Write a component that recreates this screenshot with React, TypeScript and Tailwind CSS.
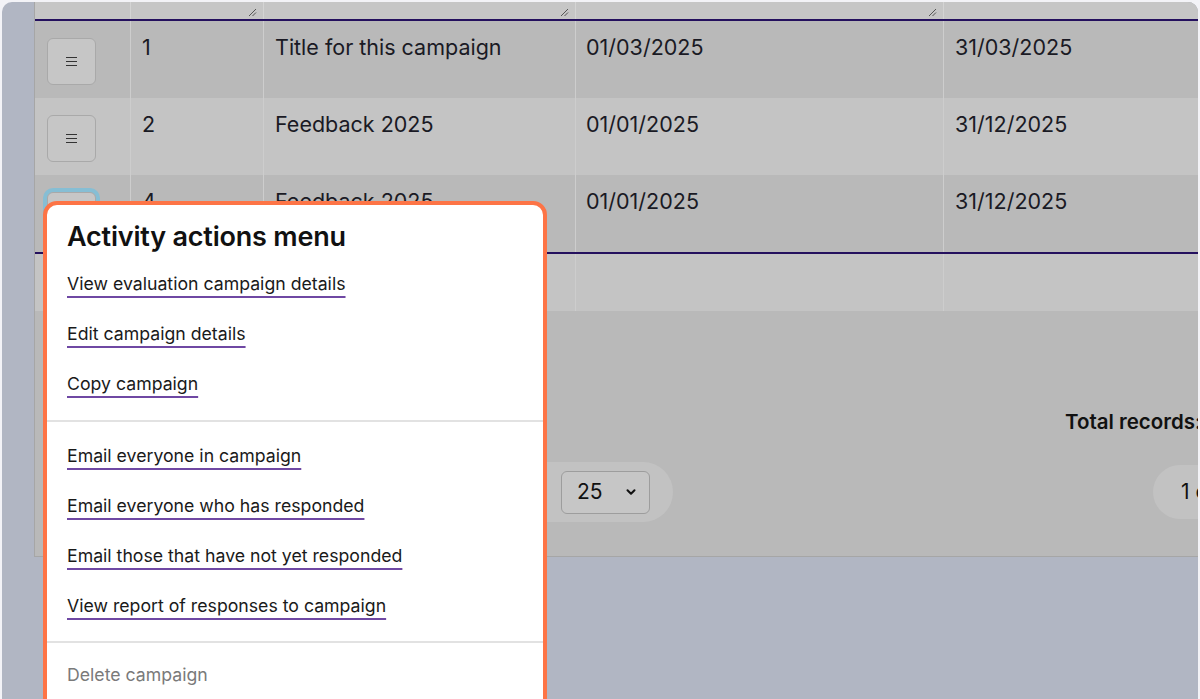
import { ChevronDown } from 'lucide-react';

const rows = [
  { id: 1, title: 'Title for this campaign', start: '01/03/2025', end: '31/03/2025', dark: true, focus: false },
  { id: 2, title: 'Feedback 2025', start: '01/01/2025', end: '31/12/2025', dark: false, focus: false },
  { id: 4, title: 'Feedback 2025', start: '01/01/2025', end: '31/12/2025', dark: true, focus: true },
];

const groupOne = ['View evaluation campaign details', 'Edit campaign details', 'Copy campaign'];
const groupTwo = [
  'Email everyone in campaign',
  'Email everyone who has responded',
  'Email those that have not yet responded',
  'View report of responses to campaign',
];

const cols = 'grid grid-cols-[96px_133px_312px_368px_1fr]';

function Grip() {
  return (
    <svg width="9" height="9" viewBox="0 0 9 9" className="mb-[2px] mr-[6px]">
      <path d="M1 8 L8 1 M4.5 8 L8 4.5" stroke="#555" strokeWidth="1" fill="none" />
    </svg>
  );
}

function MenuButton({ focus }: { focus: boolean }) {
  return (
    <div className={`w-[49px] h-[47px] rounded-[6px] border border-[#a9a9a9] bg-[#c6c6c6] flex items-center justify-center ${focus ? 'ring-4 ring-[#86bed4]' : ''}`}>
      <svg width="11" height="9" viewBox="0 0 11 9">
        <path d="M0 0.5 H11 M0 4.5 H11 M0 8.5 H11" stroke="#333" strokeWidth="1" />
      </svg>
    </div>
  );
}

function MenuLink({ label }: { label: string }) {
  return (
    <div className="h-[50px] flex items-center">
      <a href="#" className="text-[17.7px] leading-[24px] text-[#1a1a1a] underline decoration-[#6f48a3] decoration-[1.5px] underline-offset-[6px]">
        {label}
      </a>
    </div>
  );
}

export default function App() {
  return (
    <div className="relative w-[1200px] h-[699px] overflow-hidden bg-[#f3f3f7] p-[2px] font-['Inter',sans-serif]">
      <div className="h-[740px] rounded-[10px] overflow-hidden bg-[#b1b6c3] pl-[32px]">
        <div className="w-[1300px] h-[555px] bg-[#b9b9b9] border-l border-b border-[#a6a6a6] text-[#1a1a24]">
          {/* header */}
          <div className={`${cols} h-[19px] bg-[#c6c6c6] border-b-2 border-[#24105e]`}>
            <div className="border-r border-[#d4d4d4]" />
            <div className="border-r border-[#d4d4d4] flex justify-end items-end"><Grip /></div>
            <div className="border-r border-[#d4d4d4] flex justify-end items-end"><Grip /></div>
            <div className="border-r border-[#d4d4d4] flex justify-end items-end"><Grip /></div>
            <div />
          </div>

          {rows.map((r) => (
            <div key={r.id} className={`${cols} h-[77px] text-[21.5px] leading-[28px] ${r.dark ? 'bg-[#b9b9b9]' : 'bg-[#c4c4c4]'}`}>
              <div className="border-r border-[#cdcdcd] pl-[12px] pt-[17px]">
                <MenuButton focus={r.focus} />
              </div>
              <div className="border-r border-[#cdcdcd] px-[11px] pt-[12px]">{r.id}</div>
              <div className="border-r border-[#cdcdcd] px-[11px] pt-[12px]">{r.title}</div>
              <div className="border-r border-[#cdcdcd] px-[10px] pt-[12px]">{r.start}</div>
              <div className="px-[11px] pt-[12px]">{r.end}</div>
            </div>
          ))}

          {/* footer row */}
          <div className={`${cols} h-[59px] bg-[#c4c4c4] border-t-2 border-[#24105e]`}>
            <div className="border-r border-[#cdcdcd]" />
            <div className="border-r border-[#cdcdcd]" />
            <div className="border-r border-[#cdcdcd]" />
            <div className="border-r border-[#cdcdcd]" />
            <div />
          </div>

          {/* totals + pagination */}
          <div className="pt-[98px] pl-[1030px] text-[20.5px] font-semibold leading-[26px] text-[#111]">
            Total records: 3
          </div>
          <div className="mt-[27px] flex items-center">
            <div className="shrink-0 ml-[12px] w-[626px] h-[60px] rounded-full bg-[#c2c2c2] flex items-center justify-end pr-[23px]">
              <div className="w-[89px] h-[43px] rounded-[6px] border border-[#9d9d9d] bg-[#c6c6c6] flex items-center justify-between pl-[15px] pr-[11px] text-[21px] text-[#111]">
                <span>25</span>
                <ChevronDown size={14} strokeWidth={3.5} color="#111" />
              </div>
            </div>
            <div className="shrink-0 ml-[480px] w-[200px] h-[54px] rounded-full bg-[#c2c2c2] flex items-center pl-[28px] text-[21px] text-[#111]">
              1 of 1
            </div>
          </div>
        </div>
      </div>

      {/* actions menu popover */}
      <div className="absolute left-[43px] top-[201px] w-[504px] h-[560px] rounded-[14px] border-4 border-[#fd7446] bg-white">
        <div className="px-5 pt-[15px]">
          <h2 className="text-[27px] leading-[34px] font-semibold text-[#111] tracking-[-0.2px]">Activity actions menu</h2>
          <div className="mt-[5px]">
            {groupOne.map((l) => <MenuLink key={l} label={l} />)}
          </div>
        </div>
        <div className="mt-[11px] border-t-2 border-[#e2e2e2]" />
        <div className="px-5 pt-[9px]">
          {groupTwo.map((l) => <MenuLink key={l} label={l} />)}
        </div>
        <div className="mt-[10px] border-t-2 border-[#e2e2e2]" />
        <div className="px-5 pt-[7px]">
          <div className="h-[50px] flex items-center text-[17.7px] text-[#7a7a7a]">Delete campaign</div>
        </div>
      </div>
    </div>
  );
}
